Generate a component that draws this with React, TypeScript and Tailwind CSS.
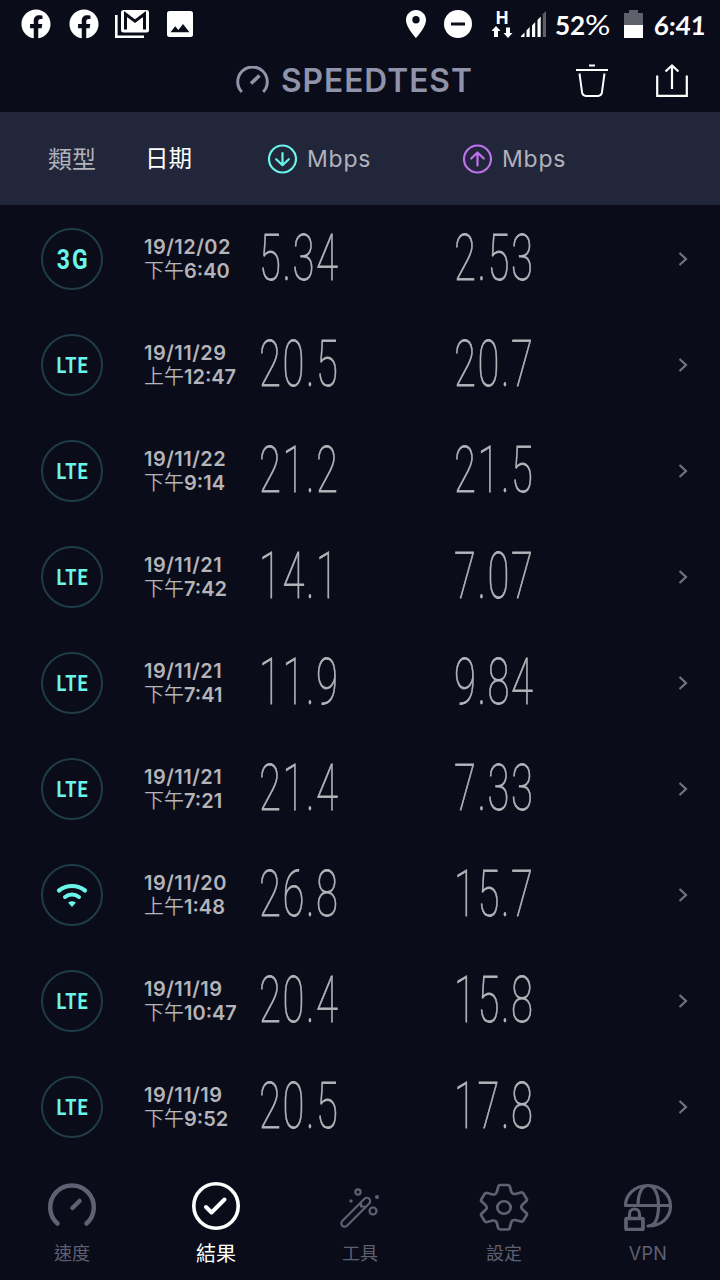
import { FaFacebook } from "react-icons/fa";

type Result = {
  type: "3G" | "LTE" | "WIFI";
  date: string;
  period: string;
  time: string;
  down: string;
  up: string;
};

const RESULTS: Result[] = [
  { type: "3G", date: "19/12/02", period: "下午", time: "6:40", down: "5.34", up: "2.53" },
  { type: "LTE", date: "19/11/29", period: "上午", time: "12:47", down: "20.5", up: "20.7" },
  { type: "LTE", date: "19/11/22", period: "下午", time: "9:14", down: "21.2", up: "21.5" },
  { type: "LTE", date: "19/11/21", period: "下午", time: "7:42", down: "14.1", up: "7.07" },
  { type: "LTE", date: "19/11/21", period: "下午", time: "7:41", down: "11.9", up: "9.84" },
  { type: "LTE", date: "19/11/21", period: "下午", time: "7:21", down: "21.4", up: "7.33" },
  { type: "WIFI", date: "19/11/20", period: "上午", time: "1:48", down: "26.8", up: "15.7" },
  { type: "LTE", date: "19/11/19", period: "下午", time: "10:47", down: "20.4", up: "15.8" },
  { type: "LTE", date: "19/11/19", period: "下午", time: "9:52", down: "20.5", up: "17.8" },
];

function StatusBar() {
  return (
    <div className="flex h-12 items-center pl-[21px] text-white">
      <FaFacebook className="size-[30px]" />
      <FaFacebook className="ml-[18px] size-[30px]" />

      {/* Gmail */}
      <svg className="ml-4 h-[30px] w-[34px]" viewBox="0 0 34 30" fill="none">
        <path d="M1.3 6v21.7H29" stroke="currentColor" strokeWidth="2.6" />
        <rect x="6" y="1" width="28" height="22.6" rx="2.5" fill="currentColor" />
        <path d="M10.5 20.5V5L20 12.2 29.5 5v15.5" stroke="#0a0c19" strokeWidth="3" />
      </svg>

      {/* 相片 */}
      <svg className="ml-[18px] h-[26px] w-[26px]" viewBox="0 0 26 26">
        <rect width="26" height="26" rx="2.5" fill="currentColor" />
        <path d="M3.5 21.3 8.2 15.3 11.4 19 16 13 22.5 21.3z" fill="#0a0c19" />
      </svg>

      <svg className="ml-[213px] h-7 w-5" viewBox="0 0 20 28">
        <path
          d="M10 0C4.5 0 0 4.4 0 9.9 0 17.2 10 28 10 28s10-10.8 10-18.1C20 4.4 15.5 0 10 0zm0 13.5a3.7 3.7 0 1 1 0-7.4 3.7 3.7 0 0 1 0 7.4z"
          fill="currentColor"
        />
      </svg>
      <svg className="ml-[18px] size-7" viewBox="0 0 28 28">
        <circle cx="14" cy="14" r="14" fill="currentColor" />
        <rect x="7" y="12.5" width="14" height="3" fill="#0a0c19" />
      </svg>

      {/* 行動數據 */}
      <div className="ml-[19px] flex h-7 w-[22px] flex-col items-center">
        <span className="h-[16px] font-['Roboto',sans-serif] text-[18px] font-bold leading-[16px]">H</span>
        <svg className="h-[12px] w-[22px]" viewBox="0 0 22 12" fill="currentColor">
          <path d="M5 0 9.5 5H7v6H3V5H.5z" />
          <path d="M17 12 12.5 7H15V1.5h4V7h2.5z" />
        </svg>
      </div>
      <svg className="ml-2 h-[26px] w-[25px]" viewBox="0 0 25 26" fill="currentColor">
        <path d="M0 26v-1l3.5-3.5V26zM5.5 26v-6.5L8.7 16v10zM11 26V14.5l3.2-3.5v15zM16.5 26V9l3.2-3.5V26z" />
        <path d="M21.8 26V3.3L25 0v26z" opacity=".35" />
      </svg>

      <span className="ml-[9px] mt-px flex w-[55px] whitespace-nowrap font-['Lato',sans-serif] text-[26px] leading-none">
        <span className="font-bold">52</span>
        <span className="inline-block origin-left scale-x-[1.22] font-normal">%</span>
      </span>
      <svg className="ml-[14px] h-7 w-[19px]" viewBox="0 0 19 28" fill="currentColor">
        <path d="M0 3h5V0h9v3h5v12H0z" opacity=".35" />
        <path d="M0 15h19v13H0z" />
      </svg>
      <span className="ml-[11px] mt-[2px] inline-block -skew-x-3 whitespace-nowrap font-['Lato',sans-serif] text-[26px] font-bold leading-none">
        6:41
      </span>
    </div>
  );
}

function Header() {
  return (
    <header className="flex h-16 items-center pl-[236px] text-[#9193aa]">
      <svg className="h-[28px] w-[33px]" viewBox="0 0 33 28" fill="none" stroke="currentColor" strokeWidth="3">
        <path d="M5.8 26a14.8 14.8 0 1 1 21.4 0" />
        <path d="M15 17.5 23.5 9.5" strokeWidth="3.6" />
      </svg>
      <h1 className="ml-3 mt-[2px] w-[190px] whitespace-nowrap font-['Inter',sans-serif] text-[32px] font-semibold leading-none">
        <span className="inline-block origin-left scale-x-[0.99] tracking-[1px]">SPEEDTEST</span>
      </h1>

      <svg
        className="ml-[105px] h-[33px] w-8 text-white"
        viewBox="0 0 32 33"
        fill="none"
        stroke="currentColor"
        strokeWidth="2"
      >
        <path d="M13 1.5h6M0 6h32M3.5 9.5l2.6 19.2a4 4 0 0 0 4 3.3h11.8a4 4 0 0 0 4-3.3L28.5 9.5" />
      </svg>
      <svg
        className="ml-12 h-[33px] w-8 text-white"
        viewBox="0 0 32 33"
        fill="none"
        stroke="currentColor"
        strokeWidth="2.2"
      >
        <path d="M1.2 11.5v20.3h29.6V11.5M16 25V2M9.5 7.5 16 1.5l6.5 6" />
      </svg>
    </header>
  );
}

function SpeedLabel({ direction }: { direction: "down" | "up" }) {
  const down = direction === "down";

  return (
    <div className="flex items-center">
      <svg
        className={`size-[30px] ${down ? "text-[#6af5ea]" : "text-[#bf71ee]"}`}
        viewBox="0 0 30 30"
        fill="none"
        stroke="currentColor"
        strokeWidth="2.2"
        strokeLinecap="round"
        strokeLinejoin="round"
      >
        <circle cx="15.5" cy="15" r="13.5" />
        <path d={down ? "M15.5 9v12M9.2 15.2l6.3 6 6.3-6" : "M15.5 21.5v-13M9.2 14.5l6.3-6 6.3 6"} />
      </svg>
      <span className="ml-[10px] mt-[2px] font-['Inter',sans-serif] text-[23px] font-normal tracking-[0.8px]">Mbps</span>
    </div>
  );
}

function TypeBadge({ type }: { type: Result["type"] }) {
  return (
    <div className="ml-px mt-[2px] flex size-[62px] items-center justify-center rounded-full border-2 border-[#1e3d47] font-['Roboto',sans-serif] font-bold leading-none text-[#6af5ea]">
      {type === "WIFI" && (
        <svg className="h-6 w-8" viewBox="0 0 32 24" fill="none" stroke="currentColor" strokeLinecap="round">
          <path d="M3 7.5a21 21 0 0 1 26 0" strokeWidth="4.2" />
          <path d="M9 14a11.5 11.5 0 0 1 14 0" strokeWidth="4" />
          <path d="M16 24l-3.8-4.2c2-2 5.6-2 7.6 0z" fill="currentColor" stroke="none" />
        </svg>
      )}
      {type === "LTE" && <span className="ml-px mt-px scale-x-[0.82] text-[22px] tracking-[1.2px]">LTE</span>}
      {type === "3G" && <span className="ml-[3px] mt-[3px] scale-x-[0.85] text-[27px] tracking-[2.2px]">3G</span>}
    </div>
  );
}

function Speed({ value }: { value: string }) {
  return (
    <span className="-ml-px mt-[2px] inline-block origin-left scale-x-[0.625] whitespace-nowrap font-['Roboto',sans-serif] text-[64px] font-thin leading-none tracking-[2.5px] text-[#b4b4b9] [-webkit-text-stroke:0.8px_#b4b4b9]">
      {value}
    </span>
  );
}

function ResultRow({ item }: { item: Result }) {
  return (
    <li className="grid h-[106px] grid-cols-[104px_116px_195px_1fr_auto] items-center pl-10 pr-8">
      <TypeBadge type={item.type} />
      <div className="mt-px whitespace-nowrap font-['Inter','Noto_Sans_CJK_TC',sans-serif] text-[20px] font-semibold leading-6 text-[#b4b4b9]">
        <p className="tracking-[0.5px]">{item.date}</p>
        <p>
          <span className="font-[350]">{item.period}</span>
          {item.time}
        </p>
      </div>
      <Speed value={item.down} />
      <Speed value={item.up} />
      <svg className="mt-[2px] h-[14px] w-[10px] text-[#73747f]" viewBox="0 0 10 14" fill="none" stroke="currentColor" strokeWidth="2.2">
        <path d="M1.5 1 8 7l-6.5 6" />
      </svg>
    </li>
  );
}

function NavBar() {
  return (
    <nav className="grid h-[121px] grid-cols-5 pt-[22px] font-['Inter','Noto_Sans_CJK_TC',sans-serif] text-[18px] leading-6 text-[#5f6072]">
      <div className="flex flex-col items-center">
        <svg className="size-[50px]" viewBox="0 0 50 50" fill="none" stroke="currentColor" strokeWidth="4.5" strokeLinecap="round">
          <path d="M10.5 42.5a21.8 21.8 0 1 1 29 0" />
          <path d="M25.5 27 32.5 20" />
        </svg>
        <span className="mt-[11px]">速度</span>
      </div>
      <div className="flex flex-col items-center text-white">
        <svg className="size-[50px]" viewBox="0 0 50 50" fill="none" stroke="currentColor" strokeLinecap="round" strokeLinejoin="round">
          <circle cx="25" cy="25" r="22.2" strokeWidth="3.6" />
          <path d="M15 26l5.5 5.5 13-13" strokeWidth="4" />
        </svg>
        <span className="mt-[11px] text-[20px]">結果</span>
      </div>
      <div className="flex flex-col items-center">
        <svg className="size-[50px]" viewBox="0 0 50 50" fill="none" stroke="currentColor" strokeWidth="2.2" strokeLinejoin="round">
          <path d="M7.3 40 29.5 17.8a3.3 3.3 0 0 1 4.7 4.7L12 44.7a3.3 3.3 0 0 1-4.7-4.7z" />
          <path d="M26 21.5v4h4" />
          <circle cx="23" cy="11" r="2.6" />
          <circle cx="38" cy="30" r="3.5" />
          <circle cx="16" cy="20" r="1.7" fill="currentColor" stroke="none" />
          <circle cx="42" cy="16" r="2" fill="currentColor" stroke="none" />
        </svg>
        <span className="mt-[11px]">工具</span>
      </div>
      <div className="flex flex-col items-center">
        <svg className="h-[50px] w-[54px]" viewBox="0 0 50 50" preserveAspectRatio="none" fill="none" stroke="currentColor" strokeWidth="2.6" strokeLinejoin="round">
          <path d="M21.5 4h7q1.5 0 1.9 1.5l1.3 5.2q.4 1.2 1.5 1.9 1.1.6 2.3.3l5.1-1.5q1.5-.4 2.3 1l3 5.2q.8 1.3-.3 2.4l-3.7 3.8q-.9.9-.9 2.2t.9 2.2l3.7 3.8q1.1 1.1.3 2.4l-3 5.2q-.8 1.4-2.3 1l-5.1-1.5q-1.2-.3-2.3.3-1.1.7-1.5 1.9l-1.3 5.200Q30 48.5 28.5 48.5h-7q-1.5 0-1.9-1.5l-1.3-5.2q-.4-1.2-1.5-1.9-1.1-.6-2.3-.3l-5.1 1.5q-1.5.4-2.3-1l-3-5.2q-.8-1.3.3-2.4l3.7-3.8q.9-.9.9-2.2t-.9-2.2l-3.7-3.8q-1.1-1.1-.3-2.4l3-5.2q.8-1.4 2.3-1l5.1 1.5q1.2.3 2.3-.3 1.1-.7 1.5-1.9l1.3-5.2Q20 4 21.5 4z" />
          <circle cx="25" cy="26.5" r="6.2" />
        </svg>
        <span className="mt-[11px]">設定</span>
      </div>
      <div className="flex flex-col items-center">
        <svg className="size-[50px]" viewBox="0 0 50 50" fill="none" stroke="currentColor" strokeWidth="3.2" strokeLinecap="round" strokeLinejoin="round">
          <path d="M2.5 24.5C2.5 13 12.5 4.5 25 4.5s22.5 8.5 22.5 20.5c0 11.5-9 20-22.5 20M2.5 24.5h45M15 24.5c0-12 4-20 10-20s10.5 8 10.5 20c0 13-3.5 20.5-10.5 20.5" />
          <rect x="3" y="37.5" width="17" height="11" rx="1" strokeWidth="3.7" />
          <path d="M6.5 37v-4a5 5 0 0 1 10 0v4" />
        </svg>
        <span className="mt-[11px] tracking-[0.4px]">VPN</span>
      </div>
    </nav>
  );
}

export default function App() {
  return (
    <div className="h-[1280px] w-[720px] overflow-hidden bg-[#0a0c19]">
      <StatusBar />
      <Header />

      <div className="grid h-[93px] grid-cols-[97px_122px_195px_1fr] items-center bg-[#22263a] pl-12 font-['Noto_Sans_CJK_TC',sans-serif] text-[24px] text-[#b1b2bb]">
        <span className="-mt-[2px]">類型</span>
        <span className="-mt-px text-[23.5px] text-white">日期</span>
        <SpeedLabel direction="down" />
        <SpeedLabel direction="up" />
      </div>

      <ul>
        {RESULTS.map((item, index) => (
          <ResultRow key={index} item={item} />
        ))}
      </ul>

      <NavBar />
    </div>
  );
}
